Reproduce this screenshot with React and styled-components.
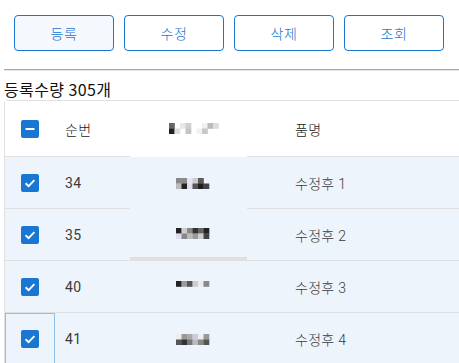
import React from "react";
import styled, { createGlobalStyle } from "styled-components";

const Global = createGlobalStyle`
  html, body { margin: 0; padding: 0; background: #fff; overflow: hidden; }
  body { font-family: Roboto, "Noto Sans CJK KR", "Liberation Sans", sans-serif; }
`;

const Page = styled.div`
  padding-left: 4px;
  width: 455px;
  height: 363px;
  overflow: hidden;
`;

const Toolbar = styled.div`
  display: flex;
  gap: 10px;
  padding: 15px 10px 0;
`;

const Button = styled.button`
  width: 100px;
  height: 36px;
  box-sizing: border-box;
  border: 1px solid #1976d2;
  border-radius: 4px;
  background: ${(p) => (p.$active ? "#f5f9fe" : "#fff")};
  color: #1976d2;
  font-family: "Noto Sans CJK KR", sans-serif;
  font-weight: 300;
  font-size: 14px;
  letter-spacing: 0.5px;
  padding: 0;
  cursor: pointer;
`;

const Divider = styled.div`
  margin-top: 18px;
  height: 1px;
  background: #a6a6a6;
  box-shadow: 0 1px 0 #e6e6e6;
`;

const Title = styled.div`
  margin-top: 9px;
  font-family: "Noto Sans CJK KR", sans-serif;
  font-size: 16px;
  line-height: 21px;
  color: #111;
  letter-spacing: 0.4px;
`;

const Grid = styled.div`
  width: 620px;
  border: 1px solid #e0e0e0;
  border-right: none;
  border-radius: 4px 0 0 0;
`;

const Row = styled.div`
  display: grid;
  grid-template-columns: 50px 75px 117px 1fr;
  height: ${(p) => (p.$header ? "56px" : "52px")};
  background: ${(p) => (p.$selected ? "#edf4fc" : "#fff")};
`;

const Cell = styled.div`
  box-sizing: border-box;
  display: flex;
  align-items: center;
  justify-content: ${(p) => (p.$center ? "center" : "flex-start")};
  padding-left: ${(p) => p.$pad ?? 0}px;
  border-bottom: ${(p) => (p.$line === undefined ? 1 : p.$line)}px solid #e0e0e0;
  font-size: 14px;
  font-weight: ${(p) => (p.$light ? 300 : 400)};
  color: ${(p) => (p.$head ? "#222" : "#3a3a3a")};
  font-family: Roboto, "Noto Sans CJK KR", sans-serif;
  letter-spacing: 0.3px;
  outline: ${(p) => (p.$focus ? "1px solid #90bfea" : "none")};
  outline-offset: -1px;
`;

const Box = styled.span`
  width: 18px;
  height: 18px;
  border-radius: 2px;
  background: #1976d2;
  display: inline-flex;
  align-items: center;
  justify-content: center;
`;

function Check({ indeterminate }) {
  return (
    <Box>
      <svg width="14" height="14" viewBox="0 0 14 14">
        {indeterminate ? (
          <rect x="2.5" y="6" width="9" height="2" fill="#fff" />
        ) : (
          <path d="M2.6 7.2 L5.6 10.1 L11.4 4.2" stroke="#fff" strokeWidth="1.9" fill="none" />
        )}
      </svg>
    </Box>
  );
}

function Mosaic({ data, size = 5.5, lift = 0 }) {
  const rows = data.length;
  const cols = data[0].length;
  return (
    <svg width={cols * size} height={rows * size} style={{ marginTop: -lift * 2 }}>
      {data.map((r, y) =>
        r.map((g, x) =>
          g === null ? null : (
            <rect key={`${x}-${y}`} x={x * size} y={y * size} width={size + 0.3} height={size + 0.3} fill={g} />
          )
        )
      )}
    </svg>
  );
}

const N = null;
const headMosaic = [
  ["#666", N, "#e8e8e8", "#cfcfcf", N, N, "#f0f0f0", "#bbb", "#ddd"],
  ["#222", "#ddd", N, "#c4c4c4", N, "#f2f2f2", "#c8c8c8", N, N],
];
const mosaics = [
  [
    ["#888", "#8a8a8a", "#e4e6ea", "#c8ccd2", "#5a5a5a", N, N],
    ["#bbb", "#222", "#dde", "#555", "#1e1e1e", "#444", N],
  ],
  [
    ["#222", "#ccc", "#888", "#333", "#666", "#222", N],
    ["#dde", "#888", "#bbb", "#999", "#ccc", "#444", N],
  ],
  [
    ["#222", "#999", "#555", "#ccc", "#e8ecf2", "#888", N],
    [N, N, N, N, N, N, N],
  ],
  [
    ["#eee", "#999", "#aaa", "#ccd", "#eee", "#999", N],
    ["#555", "#333", "#777", "#bbb", "#888", "#555", N],
  ],
];

const rows = [
  { no: 34, name: "수정후 1", mid: 0 },
  { no: 35, name: "수정후 2", mid: 4 },
  { no: 40, name: "수정후 3", mid: 1 },
  { no: 41, name: "수정후 4", mid: 0, focus: true },
];

export default function App() {
  return (
    <Page>
      <Global />
      <Toolbar>
        <Button $active>등록</Button>
        <Button>수정</Button>
        <Button>삭제</Button>
        <Button>조회</Button>
      </Toolbar>
      <Divider />
      <Title>등록수량 305개</Title>
      <Grid>
        <Row $header>
          <Cell $center>
            <Check indeterminate />
          </Cell>
          <Cell $pad={10} $head $light>순번</Cell>
          <Cell $pad={39} $line={0}>
            <Mosaic data={headMosaic} size={5.5} lift={1} />
          </Cell>
          <Cell $pad={48} $head $light>품명</Cell>
        </Row>
        {rows.map((r, i) => (
          <Row key={r.no} $selected>
            <Cell $center $focus={r.focus}>
              <Check />
            </Cell>
            <Cell $pad={10}>{r.no}</Cell>
            <Cell $pad={46} $line={r.mid}>
              <Mosaic data={mosaics[i]} size={5.5} />
            </Cell>
            <Cell $pad={48} $light>{r.name}</Cell>
          </Row>
        ))}
      </Grid>
    </Page>
  );
}
